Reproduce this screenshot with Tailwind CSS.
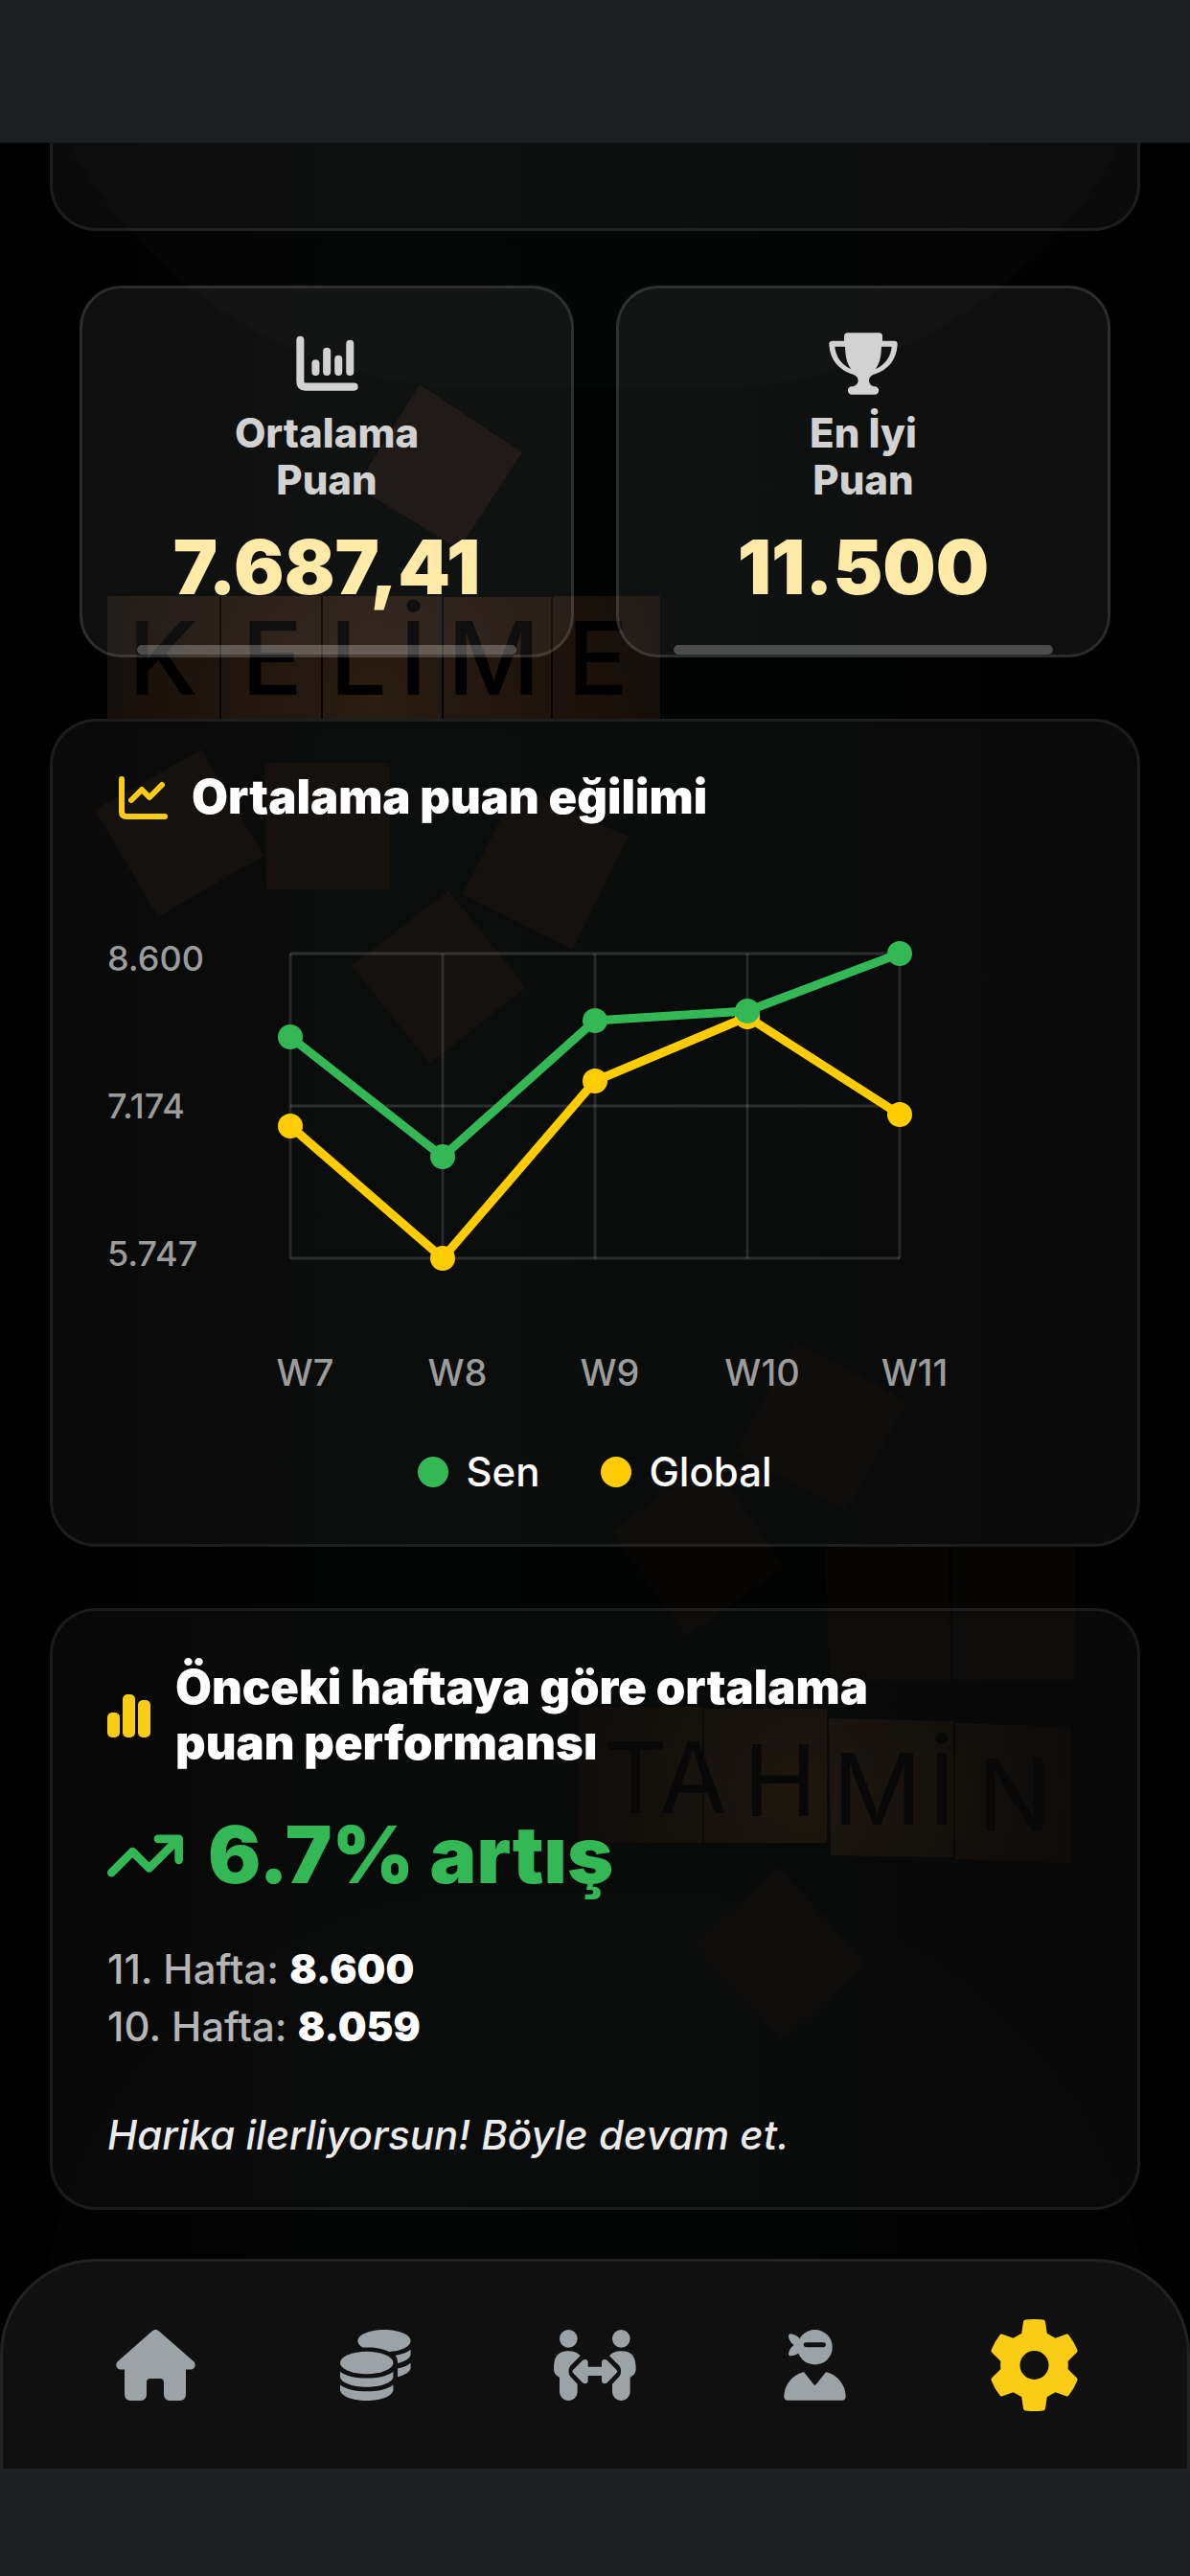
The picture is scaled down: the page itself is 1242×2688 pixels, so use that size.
<!DOCTYPE html>
<html lang="tr">
<head>
  <meta charset="UTF-8">
  <meta name="viewport" content="width=device-width, initial-scale=1.0">
  <title>İstatistikler - Kelime Tahmin</title>
  <script src="https://cdn.jsdelivr.net/npm/@tailwindcss/browser@4"></script>
</head>
<body class="min-h-screen flex flex-col bg-[#1c1f22] text-white font-['Inter','Liberation_Sans',sans-serif]">
  <div class="h-[149px] shrink-0"></div>

  <div class="relative overflow-hidden bg-black">

    <!-- Wooden tiles in the background -->
    <svg class="absolute inset-0 w-full h-full" viewBox="0 149 1242 2430" preserveAspectRatio="xMidYMin slice" aria-hidden="true">
      <defs>
        <radialGradient id="woodTop" gradientUnits="userSpaceOnUse" cx="390" cy="730" r="330">
          <stop offset="0" stop-color="#2a1d11" />
          <stop offset="1" stop-color="#130d09" />
        </radialGradient>
        <radialGradient id="woodBottom" gradientUnits="userSpaceOnUse" cx="840" cy="1870" r="280">
          <stop offset="0" stop-color="#161008" />
          <stop offset="1" stop-color="#060403" />
        </radialGradient>
        <linearGradient id="night" x1="0" x2="1" y1="0" y2="0">
          <stop offset="0" stop-color="#000000" />
          <stop offset="0.3" stop-color="#020303" />
          <stop offset="0.7" stop-color="#010202" />
          <stop offset="1" stop-color="#000000" />
        </linearGradient>
      </defs>
      <rect y="149" width="1242" height="2430" fill="url(#night)" />
      <rect x="13" y="-570" width="1216" height="975" rx="487" fill="#fff" fill-opacity="0.014" />
      <rect x="40" y="1975" width="1162" height="975" rx="480" fill="#fff" fill-opacity="0.007" />

      <path d="M438 401L545 472 479 573 372 508z" fill="#130d0a" />
      <g fill="#0c0806">
        <path d="M210 782L275 893 165 957 99 845z" />
        <path d="M276 796H407V928H278z" />
        <path d="M540 820L656 873 598 991 483 933z" />
        <path d="M468 929L549 1030 449 1110 367 1008z" />
      </g>
      <g fill="#070504">
        <path d="M830 1400L947 1462 883 1577 767 1515z" />
        <path d="M741 1523L819 1635 717 1708 638 1598z" />
        <path d="M861 1615L991 1612 992 1753H866z" />
        <path d="M994 1614H1122V1753H995z" />
        <path d="M813 1948L905 2051 816 2129 723 2030z" />
      </g>

      <g fill="url(#woodTop)">
        <path d="M112 622H229V750H112z" />
        <path d="M231 622H335V750H231z" />
        <path d="M337 622H461V750H337z" />
        <path d="M463 623H575V750H463z" />
        <path d="M577 622H689V750H577z" />
      </g>
      <text y="725" x="134 252 344 417 467 592" fill="#000" font-family="Inter, 'Liberation Sans', sans-serif" font-size="106" font-weight="500">KELİME</text>

      <g fill="url(#woodBottom)">
        <path d="M604 1781H733V1923H604z" />
        <path d="M735 1783H863V1923H735z" />
        <path d="M865 1793L995 1796V1938L867 1936z" />
        <path d="M997 1798L1118 1802V1944L997 1940z" />
      </g>
      <text x="630 688 776 869 969 1020" y="1892 1892 1895 1904 1904 1910" fill="#000" font-family="Inter, 'Liberation Sans', sans-serif" font-size="103">TAHMİN</text>
    </svg>

    <main class="relative flex flex-col gap-16 px-[52px]">
      <div class="h-[92px] -mb-[7px] rounded-b-[48px] border-3 border-t-0 border-white/8 bg-white/4"></div>

      <section class="grid grid-cols-2 gap-11 mx-[31px]">
        <div class="relative flex flex-col items-center rounded-[44px] border-3 border-white/12 bg-white/6 pt-[46px] pb-[51px] text-center">
          <svg class="w-[65px] h-[65px]" viewBox="56 52 194 194" fill="none" stroke="#d2d2d2" stroke-width="24" stroke-linecap="round" stroke-linejoin="round" aria-hidden="true">
            <path d="M69 75V205Q69 221 85 221H237" />
            <path d="M117 148V174M152 111V174M188 135V174M224 87V174" />
          </svg>
          <h3 class="mt-[15px] text-[42px] leading-[49px] font-extrabold text-[#d2d2d2]">Ortalama<br>Puan</h3>
          <p class="mt-[27px] text-[78px] leading-[80px] font-black text-[#ffeaa7]">7.687,41</p>
          <div class="absolute inset-x-[57px] bottom-0 h-[10px] rounded-full bg-white/25"></div>
        </div>

        <div class="relative flex flex-col items-center rounded-[44px] border-3 border-white/12 bg-white/6 pt-[46px] pb-[51px] text-center">
          <svg class="w-[72px] h-[65px]" viewBox="42 37 216 193" fill="#d2d2d2" fill-rule="evenodd" aria-hidden="true">
            <path d="M101 37H199a11 11 0 0 1 11 11V62H246c8 0 12 4 11 12-3 48-30 80-76 94-8 4-13 10-13 18 0 10 8 19 18 19a12 12 0 0 1 0 25H114a12 12 0 0 1 0-25c10 0 20-8 20-19 0-9-6-14-14-18C74 154 46 122 43 74c-1-8 3-12 11-12H90V48a11 11 0 0 1 11-11zM61 80c3 32 21 57 50 70-13-20-17-40-18-70zM239 80H207c-1 30-5 50-18 70 29-13 47-38 50-70z" />
          </svg>
          <h3 class="mt-[15px] text-[42px] leading-[49px] font-extrabold text-[#d2d2d2]">En İyi<br>Puan</h3>
          <p class="mt-[27px] text-[78px] leading-[80px] font-black text-[#ffeaa7]">11.500</p>
          <div class="absolute inset-x-[57px] bottom-0 h-[10px] rounded-full bg-white/25"></div>
        </div>
      </section>

      <!-- Score trend -->
      <section class="rounded-[48px] border-3 border-white/8 bg-white/4 px-[57px] py-[50px]">
        <div class="flex items-center gap-[25px] pl-3">
          <svg class="w-[51px] h-[45px]" viewBox="0 0 51 45" fill="none" stroke="#facc15" stroke-width="6" stroke-linecap="round" stroke-linejoin="round" aria-hidden="true">
            <path d="M3 3V37Q3 42 8 42H48" />
            <path d="M13 25L24 14 32 22 45 9" />
          </svg>
          <h2 class="text-[49px] leading-[58px] font-black">Ortalama puan eğilimi</h2>
        </div>

        <div class="mt-[117px] flex">
          <div class="flex w-[191px] flex-col justify-between text-[36px] leading-[44px] font-medium text-[#9c9c9c]">
            <span>8.600</span>
            <span>7.174</span>
            <span>5.747</span>
          </div>
          <svg class="my-[17px] w-[636px] h-[318px] overflow-visible" viewBox="0 0 636 318" fill="none" role="img" aria-label="Ortalama puan eğilimi">
            <path d="M0 0H636M0 159H636M0 318H636" stroke="#fff" stroke-opacity="0.14" stroke-width="3" />
            <path d="M0 0V318M159 0V318M318 0V318M477 0V318M636 0V318" stroke="#fff" stroke-opacity="0.12" stroke-width="3" />
            <polyline points="0,180 159,318 318,133 477,66 636,168" stroke="#ffcc00" stroke-width="9" />
            <g fill="#ffcc00">
              <circle cx="0" cy="180" r="13" />
              <circle cx="159" cy="318" r="13" />
              <circle cx="318" cy="133" r="13" />
              <circle cx="477" cy="66" r="13" />
              <circle cx="636" cy="168" r="13" />
            </g>
            <polyline points="0,87 159,212 318,70 477,60 636,0" stroke="#34b855" stroke-width="9" />
            <g fill="#34b855">
              <circle cx="0" cy="87" r="13" />
              <circle cx="159" cy="212" r="13" />
              <circle cx="318" cy="70" r="13" />
              <circle cx="477" cy="60" r="13" />
              <circle cx="636" cy="0" r="13" />
            </g>
          </svg>
        </div>

        <div class="mt-[79px] ml-[127px] grid w-[795px] grid-cols-5 text-center text-[38px] leading-[46px] font-medium text-[#9c9c9c]">
          <span>W7</span>
          <span>W8</span>
          <span>W9</span>
          <span>W10</span>
          <span>W11</span>
        </div>

        <div class="mt-[55px] flex justify-center gap-16 text-[42px] leading-[51px] font-medium">
          <div class="flex items-center gap-[18px]">
            <span class="size-8 rounded-full bg-[#34b855]"></span>
            <span>Sen</span>
          </div>
          <div class="flex items-center gap-[18px]">
            <span class="size-8 rounded-full bg-[#ffcc00]"></span>
            <span>Global</span>
          </div>
        </div>
      </section>

      <!-- Weekly comparison -->
      <section class="rounded-[48px] border-3 border-white/8 bg-white/3 px-[57px] pt-[51px] pb-[45px]">
        <div class="flex items-center gap-[26px]">
          <svg class="w-[45px] h-[45px] shrink-0" viewBox="0 0 45 45" fill="#facc15" aria-hidden="true">
            <rect x="0" y="19" width="13" height="26" rx="5" />
            <rect x="16" y="0" width="13" height="45" rx="5" />
            <rect x="32" y="6" width="13" height="39" rx="5" />
          </svg>
          <h2 class="max-w-[800px] text-[49px] leading-[58px] font-black">Önceki haftaya göre ortalama puan performansı</h2>
        </div>

        <div class="mt-[43px] flex items-center gap-[26px] text-[#34b855]">
          <svg class="w-[79px] h-[45px] shrink-0" viewBox="94 520 237 134" fill="none" stroke="currentColor" stroke-width="26" stroke-linecap="round" stroke-linejoin="round" aria-hidden="true">
            <path d="M107 640L173 574 225 626 313 538" />
            <path d="M253 534H318V600" />
          </svg>
          <p class="text-[82px] leading-[90px] font-black">6.7% artış</p>
        </div>

        <div class="mt-[44px] text-[42px] leading-[60px] font-medium text-[#b5b5b5]">
          <p>11. Hafta: <strong class="font-black text-white">8.600</strong></p>
          <p>10. Hafta: <strong class="font-black text-white">8.059</strong></p>
        </div>

        <p class="mt-[53px] text-[42px] leading-[60px] font-medium italic text-[#ebebeb]">Harika ilerliyorsun! Böyle devam et.</p>
      </section>
    </main>

    <nav class="relative mt-[51px] grid h-[222px] grid-cols-5 items-center justify-items-center rounded-t-[100px] border-3 border-[#222222] bg-[#101010] px-[45px] text-[#9ca3a7]">
      <a href="#" aria-label="Ana sayfa">
        <svg class="w-[83px] h-[74px]" viewBox="0 0 83 74" fill="currentColor" aria-hidden="true">
          <path d="M41.3 0c-1.5 0-2.6.6-3.6 1.6L2 33c-3.3 3-1.5 8.5 3 8.5h4V68a6 6 0 0 0 6 6h11a6 6 0 0 0 6-6V55a4 4 0 0 1 4-4h10a4 4 0 0 1 4 4v13a6 6 0 0 0 6 6h11a6 6 0 0 0 6-6V41.5h5c4.5 0 6.3-5.5 3-8.5L45 1.6C44 .6 42.8 0 41.3 0z" />
        </svg>
      </a>
      <a href="#" aria-label="Jetonlar">
        <svg class="w-[74px] h-[74px]" viewBox="0 0 74 74" fill="currentColor" aria-hidden="true">
          <path d="M23.7 18.6C20 16.8 18.4 14.2 18.4 11.6C18.4 5.2 30.8 0 46 0S73.6 5.2 73.6 11.6S63 22.7 51 23C46 20.3 38.5 18.5 27.7 18.5z" />
          <path d="M57.5 27C65 25.6 70 23.5 73.6 20.7V25.5C73.6 29.5 68 33 60 35C60 31.5 59.5 29 57.5 27z" />
          <path d="M60 40.5C66 39.3 70.5 37.3 73.6 34.7V39.5C73.6 43.5 68 47.3 60 49.3z" />
          <ellipse cx="27.7" cy="34.5" rx="27.7" ry="11.7" />
          <path d="M0 43.7C6 48.5 16 50.5 27.7 50.5S49.5 48.5 55.4 43.7V48.7C55.4 55 43 59.7 27.7 59.7S0 55 0 48.7z" />
          <path d="M0 57.5C6 62.3 16 64.3 27.7 64.3S49.5 62.3 55.4 57.5V62.5C55.4 69 43 74 27.7 74S0 69 0 62.5z" />
        </svg>
      </a>
      <a href="#" aria-label="Düello">
        <svg class="w-[86px] h-[74px]" viewBox="55 65 258 222" fill="currentColor" aria-hidden="true">
          <circle cx="101" cy="93" r="28" />
          <circle cx="266" cy="93" r="28" />
          <path d="M101 132c17 0 29 5 37 15L108 177c-8 9-9 26 0 36L129 235V260a27 27 0 0 1-27 27h-2a27 27 0 0 1-27-27V214C62 208 55 200 55 187c0-35 10-55 46-55z" />
          <path d="M266 132c-17 0-29 5-37 15L259 177c8 9 9 26 0 36L238 235V260a27 27 0 0 0 27 27h2a27 27 0 0 0 27-27V214C305 208 312 200 312 187c0-35-10-55-46-55z" />
          <path d="M116 190L145 161c7-6 17-3 17 6V181H205V167c0-9 10-12 17-6L251 190c4 4 4 7 0 11L222 231c-7 6-17 3-17-6V209H162V225c0 9-10 12-17 6L116 201c-4-4-4-7 0-11z" />
        </svg>
      </a>
      <a href="#" aria-label="Profil">
        <svg class="w-[65px] h-[74px]" viewBox="774 65 196 223" fill="currentColor" aria-hidden="true">
          <circle cx="872" cy="120" r="55" />
          <path d="M789 86c0-6 3-8 8-8 14 3 24 9 29 19L818 112 828 132c-7 9-18 14-31 15-6 0-8-3-8-7 2-12 8-20 17-27-9-7-16-15-17-27z" />
          <path d="M844 112.5H899" stroke="#101010" stroke-width="15" stroke-linecap="round" />
          <path d="M833 199c3-1 6-1 7 2L868 237c2 3 6 3 8 0L904 201c2-3 5-3 7-2 35 10 58 42 58 77 0 7-5 11-11 11H786c-7 0-11-4-11-11 0-35 23-67 58-77z" />
        </svg>
      </a>
      <a href="#" aria-label="Ayarlar" aria-current="page" class="text-[#facc15]">
        <svg class="w-[91px] h-[96px]" viewBox="0 0 91 96" fill="currentColor" stroke="currentColor" stroke-width="5" stroke-linejoin="round" fill-rule="evenodd" aria-hidden="true">
          <path d="M36.5 3Q45.5 2 54.5 3L56.5 16.5 67 22.5 79.5 18Q85 25 88 33L78 43Q78.6 48 78 53L88 63Q85 71 79.5 78L67 73.5 56.5 79.5 54.5 93Q45.5 94 36.5 93L34.5 79.5 24 73.5 11.5 78Q6 71 3 63L13 53Q12.4 48 13 43L3 33Q6 25 11.5 18L24 22.5 34.5 16.5zM45.5 30.5A17.5 17.5 0 1 0 45.5 65.5A17.5 17.5 0 1 0 45.5 30.5z" />
        </svg>
      </a>
    </nav>
  </div>
</body>
</html>
